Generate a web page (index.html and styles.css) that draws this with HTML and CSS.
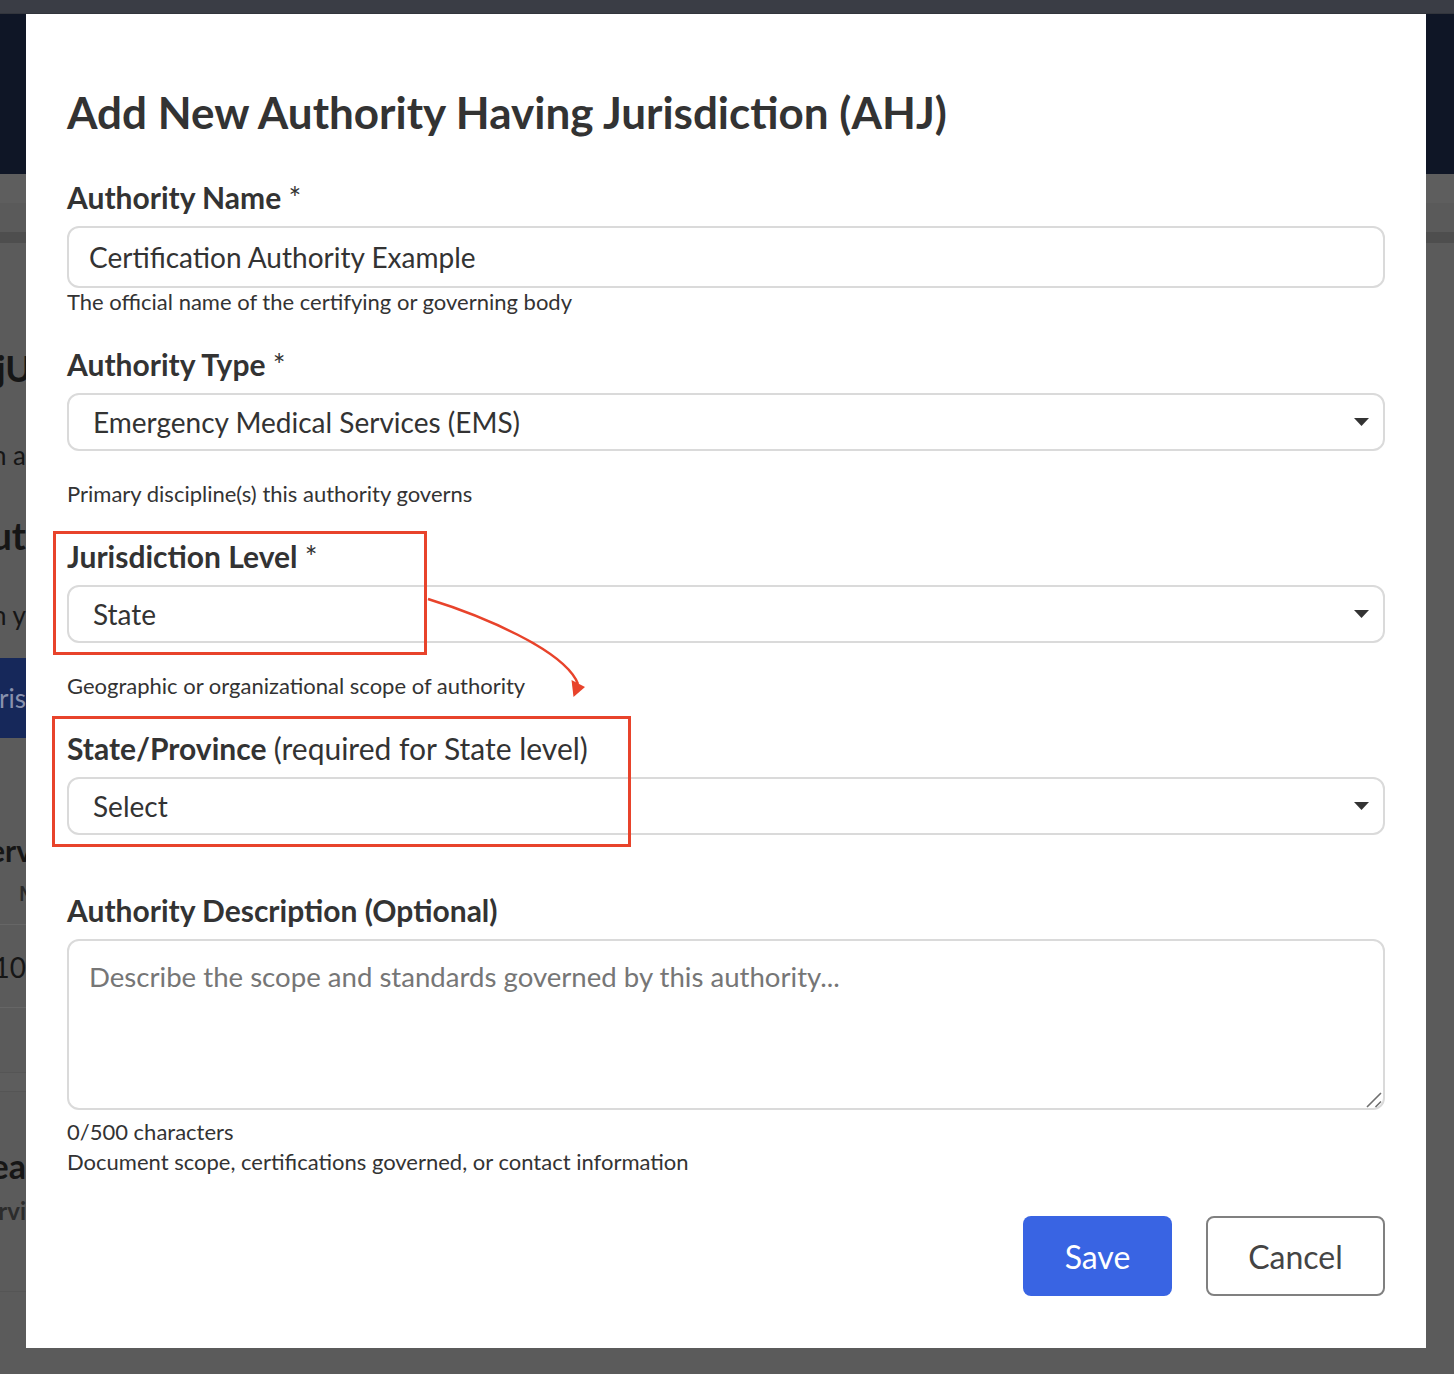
FILE: index.html
```html
<!DOCTYPE html>
<html lang="en">
<head>
<meta charset="utf-8">
<title>Add New Authority Having Jurisdiction (AHJ)</title>
<link rel="stylesheet" href="styles.css">
</head>
<body>
<div class="page">
  <div class="topbar"></div>
  <div class="header"></div>
  <div class="crumbs"></div>
  <div class="tabs"></div>
  <div class="tabs-border"></div>
  <div class="bg-col">
    <div class="bg-row r-space1"></div>
    <div class="bg-row r-h1"><span class="spill">AdjU</span></div>
    <div class="bg-row r-p1"><span>Within a</span></div>
    <div class="bg-row r-h2"><span>Aut</span></div>
    <div class="bg-row r-p2"><span>Within y</span></div>
    <div class="bg-row r-btn"><span>Juris</span></div>
    <div class="bg-row r-h3"><span class="spill">Serv</span></div>
    <div class="bg-row r-th"><span>M</span></div>
    <div class="bg-line"></div>
    <div class="bg-row r-td"><span>10</span></div>
    <div class="bg-line l2"></div>
    <div class="bg-band"></div>
    <div class="bg-row r-h4"><span>Area</span></div>
    <div class="bg-row r-sub"><span>Servi</span></div>
    <div class="bg-line l3"></div>
  </div>
</div>

<div class="modal" role="dialog" aria-labelledby="dlg-title">
  <h2 class="modal-title" id="dlg-title">Add New Authority Having Jurisdiction (AHJ)</h2>

  <div class="field">
    <label class="label" for="auth-name">Authority Name <span class="req">*</span></label>
    <input class="input" id="auth-name" type="text" value="Certification Authority Example">
    <div class="help help-tight">The official name of the certifying or governing body</div>
  </div>

  <div class="field">
    <div class="label">Authority Type <span class="req">*</span></div>
    <div class="select">
      <span>Emergency Medical Services (EMS)</span>
      <svg class="caret" width="15" height="8" viewBox="0 0 15 8"><path d="M0 0 L15 0 L7.5 8 Z"/></svg>
    </div>
    <div class="help">Primary discipline(s) this authority governs</div>
  </div>

  <div class="field">
    <div class="label">Jurisdiction Level <span class="req">*</span></div>
    <div class="select">
      <span>State</span>
      <svg class="caret" width="15" height="8" viewBox="0 0 15 8"><path d="M0 0 L15 0 L7.5 8 Z"/></svg>
    </div>
    <div class="help">Geographic or organizational scope of authority</div>
  </div>

  <div class="field">
    <div class="label">State/Province <span class="label-note">(required for State level)</span></div>
    <div class="select">
      <span>Select</span>
      <svg class="caret" width="15" height="8" viewBox="0 0 15 8"><path d="M0 0 L15 0 L7.5 8 Z"/></svg>
    </div>
  </div>

  <div class="field">
    <label class="label" for="auth-desc">Authority Description (Optional)</label>
    <div class="textarea-wrap">
      <textarea class="textarea" id="auth-desc" placeholder="Describe the scope and standards governed by this authority..."></textarea>
      <svg class="grip" width="16" height="16" viewBox="0 0 16 16">
        <path d="M1 15 L15 1 M9.5 15 L15 9.5" stroke="#6f6f6f" stroke-width="1.6" fill="none"/>
      </svg>
    </div>
    <div class="help">0/500 characters</div>
    <div class="help">Document scope, certifications governed, or contact information</div>
  </div>

  <div class="actions">
    <button class="btn btn-primary" type="button">Save</button>
    <button class="btn btn-outline" type="button">Cancel</button>
  </div>

  <div class="annot annot-1"></div>
  <div class="annot annot-2"></div>
  <svg class="annot-arrow" width="1400" height="1334" viewBox="0 0 1400 1334">
    <path d="M402 585 C454 601 539 636 552 670" fill="none" stroke="#e8432b" stroke-width="2.5"/>
    <path d="M545.5 666 L559 673 L547.5 683 Z" fill="#e8432b"/>
  </svg>
</div>
</body>
</html>
```

FILE: styles.css
```css
* { box-sizing: border-box; }

html, body {
  margin: 0;
  padding: 0;
}

body {
  width: 1454px;
  height: 1374px;
  overflow: hidden;
  background: #5b5b5b;
  font-family: Lato, "Noto Sans", "Liberation Sans", sans-serif;
  color: #333;
}

/* ---------- dimmed background page ---------- */
.page {
  width: 1454px;
}
.topbar {
  height: 14px;
  background: #3a3d45;
  border-bottom: 1px solid #32353c;
}
.header {
  height: 160px;
  background: #0f1626;
}
.crumbs {
  height: 29px;
  background: #5e5e5e;
}
.tabs {
  height: 29px;
  background: #5a5a5a;
}
.tabs-border {
  height: 11px;
  background: #4e4e4e;
}
.bg-col {
  width: 26px;
  overflow: hidden;
}
.bg-row {
  display: flex;
  justify-content: flex-end;
  align-items: center;
  white-space: nowrap;
  color: #161616;
}
.spill {
  margin-right: -6px;
}
.r-space1 { height: 102px; }
.r-h1 { height: 45px; font-size: 36px; font-weight: 700; }
.r-p1 { height: 50px; margin-top: 40px; font-size: 26px; }
.r-h2 { height: 46px; margin-top: 32px; font-size: 38px; font-weight: 700; }
.r-p2 { height: 50px; margin-top: 32px; font-size: 26px; }
.r-btn {
  height: 80px;
  margin-top: 18px;
  background: #16285a;
  color: #8891ad;
  font-size: 26px;
}
.r-h3 { height: 40px; margin-top: 92px; font-size: 30px; font-weight: 700; }
.r-th { height: 26px; margin-top: 10px; font-size: 20px; font-weight: 700; color: #2a2a2a; justify-content: flex-start; padding-left: 19px; }
.bg-line {
  height: 1px;
  margin-top: 18px;
  background: #666;
}
.r-td { height: 44px; margin-top: 20px; font-size: 28px; }
.bg-line.l2 { margin-top: 18px; }
.bg-band {
  height: 20px;
  margin-top: 64px;
  border-top: 1px solid #555;
  border-bottom: 1px solid #555;
  background: #5d5d5d;
}
.r-h4 { height: 36px; margin-top: 55px; font-size: 34px; font-weight: 700; }
.r-sub { height: 30px; margin-top: 12px; font-size: 24px; font-weight: 700; color: #2c2c2c; }
.bg-line.l3 { margin-top: 66px; background: #555; }

/* ---------- modal ---------- */
.modal {
  position: fixed;
  left: 26px;
  top: 14px;
  width: 1400px;
  height: 1334px;
  background: #fff;
  padding: 72px 41px 0;
}

.modal-title {
  margin: 0 0 42px;
  font-size: 44px;
  line-height: 53px;
  font-weight: 700;
  color: #333;
}

.field {
  display: flex;
  flex-direction: column;
  margin-bottom: 31px;
}

.label {
  display: block;
  font-size: 30px;
  line-height: 32px;
  font-weight: 700;
  color: #333;
  margin-bottom: 13px;
}
.req {
  font-weight: 400;
}
.label-note {
  font-weight: 400;
}

.input {
  height: 62px;
  width: 100%;
  border: 2px solid #dadada;
  border-radius: 12px;
  padding: 0 20px;
  font-family: inherit;
  font-size: 28px;
  color: #333;
  background: #fff;
  outline: none;
}

.select {
  height: 58px;
  width: 100%;
  border: 2px solid #dadada;
  border-radius: 12px;
  padding: 0 14px 0 24px;
  display: flex;
  align-items: center;
  justify-content: space-between;
  font-size: 28px;
  color: #333;
  margin-bottom: 28px;
}
.caret {
  fill: #333;
  display: block;
}

.help {
  font-size: 22px;
  line-height: 30px;
  color: #333;
}
.help-tight {
  margin-top: -1px;
}

.textarea-wrap {
  position: relative;
  margin-bottom: 7px;
}
.textarea {
  display: block;
  width: 100%;
  height: 171px;
  border: 2px solid #dadada;
  border-radius: 12px;
  padding: 19px 20px;
  font-family: inherit;
  font-size: 27.6px;
  line-height: 34px;
  color: #333;
  resize: none;
  outline: none;
}
.textarea::placeholder {
  color: #767676;
}
.grip {
  position: absolute;
  right: 3px;
  bottom: 2px;
  pointer-events: none;
}

.actions {
  display: flex;
  justify-content: flex-end;
  gap: 34px;
  margin-top: 39px;
}
.btn {
  height: 80px;
  border-radius: 8px;
  font-family: inherit;
  font-size: 32px;
  cursor: pointer;
}
.btn-primary {
  width: 149px;
  background: #3964e3;
  border: none;
  color: #fff;
}
.btn-outline {
  width: 179px;
  background: #fff;
  border: 2px solid #808080;
  color: #444;
}

/* ---------- annotations ---------- */
.annot {
  position: absolute;
  border: 3px solid #e8432b;
  pointer-events: none;
}
.annot-1 {
  left: 27px;
  top: 517px;
  width: 374px;
  height: 124px;
}
.annot-2 {
  left: 26px;
  top: 702px;
  width: 579px;
  height: 131px;
}
.annot-arrow {
  position: absolute;
  left: 0;
  top: 0;
  pointer-events: none;
}
```
